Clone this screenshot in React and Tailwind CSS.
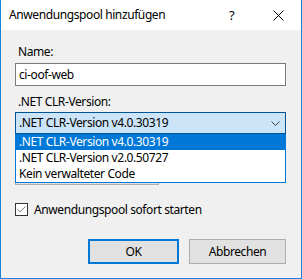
import { Check } from 'lucide-react';

const versions = ['.NET CLR-Version v4.0.30319', '.NET CLR-Version v2.0.50727', 'Kein verwalteter Code'];

export default function App() {
  return (
    <div className="w-[302px] h-[279px] bg-[#f0f0f0] border-x border-b border-[#1883d7] flex flex-col text-[12px] tracking-[-0.4px] text-black font-['Noto_Sans',sans-serif] overflow-hidden">
      {/* Title bar */}
      <div className="h-[30px] bg-white flex items-center pl-2 shrink-0">
        <span className="flex-1 leading-[16px]">Anwendungspool hinzufügen</span>
        <span className="w-[8px] text-[13px] leading-[16px] mr-[36px]">?</span>
        <svg width="11" height="11" viewBox="0 0 11 11" className="mr-[17px]">
          <path d="M0.5 0.5 L10.5 10.5 M10.5 0.5 L0.5 10.5" stroke="#000" strokeWidth="1" />
        </svg>
      </div>

      {/* Body */}
      <div className="flex flex-col pl-[14px] pr-[15px]">
        <div className="mt-[14px] h-[16px] leading-[16px] pl-[3px]">Name:</div>
        <div className="mt-[3px] h-[23px] bg-white border border-[#7a7a7a] flex items-center pl-[3px] leading-[16px]">ci-oof-web</div>

        <div className="mt-[8px] h-[16px] leading-[16px] pl-[3px]">.NET CLR-Version:</div>
        <div className="relative mt-[2px] h-[22px]">
          <div className="h-full bg-[#cce4f7] border border-[#005499] flex items-center pl-[3px] leading-[16px]">
            <span className="flex-1">{versions[0]}</span>
            <svg width="9" height="5" viewBox="0 0 9 5" className="mr-[5px]">
              <path d="M0.5 0.5 L4.5 4.5 L8.5 0.5" stroke="#404040" fill="none" strokeWidth="1" />
            </svg>
          </div>
          {/* open drop-down list */}
          <div className="absolute left-0 right-0 top-full z-10 bg-white border-x border-b border-[#0078d7] flex flex-col">
            {versions.map((v, i) => (
              <div key={v} className={`h-[16px] leading-[16px] pl-[3px] ${i === 0 ? 'bg-[#0078d7] text-white' : ''}`}>{v}</div>
            ))}
          </div>
        </div>

        {/* control hidden behind the open list */}
        <div className="mt-[29px] h-[22px] w-[144px] bg-[#e1e1e1] border border-[#adadad]" />

        <label className="mt-[18px] h-[13px] flex items-center">
          <span className="w-[13px] h-[13px] bg-white border border-[#333] flex items-center justify-center">
            <Check size={11} strokeWidth={1.5} className="text-[#333]" />
          </span>
          <span className="ml-[6px] leading-[16px]">Anwendungspool sofort starten</span>
        </label>

        <div className="mt-[23px] flex justify-end gap-[10px]">
          <button className="w-[91px] h-[25px] bg-[#e1e1e1] border-2 border-[#0078d7] leading-[16px]">OK</button>
          <button className="w-[97px] h-[25px] bg-[#e1e1e1] border border-[#adadad] leading-[16px]">Abbrechen</button>
        </div>
      </div>
    </div>
  );
}
